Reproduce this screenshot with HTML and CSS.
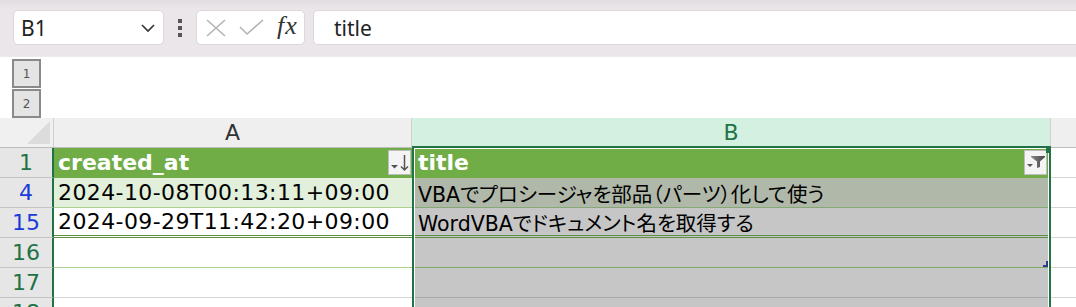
FILE: index.html
```html
<!DOCTYPE html>
<html lang="ja">
<head>
    <meta charset="UTF-8">
    <meta name="viewport" content="width=device-width, initial-scale=1.0">
    <title>Book1 - Excel</title>
    <link rel="stylesheet" href="styles.css">
</head>

<body>
    <!-- 名前ボックスと数式バー -->
    <div class="toolbar">
        <div class="name-box">
            <span>B1</span>
            <svg width="16" height="10" viewBox="0 0 16 10"><polyline points="2,2 8,8 14,2" fill="none" stroke="#333" stroke-width="1.6"/></svg>
        </div>
        <div class="more"><i></i><i></i><i></i></div>
        <div class="fx-buttons">
            <svg class="btn-cancel" width="20" height="18" viewBox="0 0 20 18"><path d="M1 1L19 17M19 1L1 17" stroke="#b4b4b4" stroke-width="1.6" fill="none"/></svg>
            <svg class="btn-enter" width="26" height="18" viewBox="0 0 26 18"><polyline points="1,8 8,15 24,1" stroke="#b4b4b4" stroke-width="1.6" fill="none"/></svg>
            <span class="fx">fx</span>
        </div>
        <div class="formula">title</div>
    </div>

    <!-- アウトラインのレベル -->
    <div class="outline">
        <div class="level">1</div>
        <div class="level">2</div>
    </div>

    <div class="sheet">
        <div class="row cols">
            <div class="corner"><div class="tri"></div></div>
            <div class="colhead">A</div>
            <div class="colhead sel">B</div>
            <div class="colhead rest"></div>
        </div>

        <div class="row r-head">
            <div class="rh">1</div>
            <div class="ca">created_at
                <span class="drop">
                    <svg width="21" height="23" viewBox="0 0 21 23"><polygon points="2,14 9,14 5.5,17.5" fill="#555"/><path d="M15.5 4V19M12 15.5L15.5 19L19 15.5" stroke="#555" stroke-width="1.5" fill="none"/></svg>
                </span>
            </div>
            <div class="cb">title
                <span class="drop">
                    <svg width="21" height="23" viewBox="0 0 21 23"><defs><linearGradient id="fun" x1="0" x2="1"><stop offset="0" stop-color="#8a8a8a"/><stop offset="1" stop-color="#444"/></linearGradient></defs><polygon points="2,13 8,13 5,16" fill="#555"/><polygon points="6,5 20,5 20,6 15,10.5 15,16 12,17 12,10.5 6,6" fill="url(#fun)"/></svg>
                </span>
            </div>
            <div class="cr"></div>
        </div>

        <div class="row r-band">
            <div class="rh blue">4</div>
            <div class="ca">2024-10-08T00:13:11+09:00</div>
            <div class="cb">VBAでプロシージャを部品（パーツ）化して使う</div>
            <div class="cr"></div>
        </div>

        <div class="row r-last">
            <div class="rh blue">15</div>
            <div class="ca">2024-09-29T11:42:20+09:00</div>
            <div class="cb">WordVBAでドキュメント名を取得する</div>
            <div class="cr"></div>
        </div>

        <div class="row r-tbl">
            <div class="rh">16</div>
            <div class="ca"></div>
            <div class="cb"><span class="resize"></span></div>
            <div class="cr"></div>
        </div>

        <div class="row r-plain">
            <div class="rh">17</div>
            <div class="ca"></div>
            <div class="cb"></div>
            <div class="cr"></div>
        </div>

        <div class="row r-plain">
            <div class="rh">18</div>
            <div class="ca"></div>
            <div class="cb"></div>
            <div class="cr"></div>
        </div>

        <!-- 列Bの選択枠 -->
        <div class="selection"></div>
        <div class="fill-handle"></div>
    </div>
</body>

</html>
```

FILE: styles.css
```css
* {
    padding: 0px;
    margin: 0px;
}

html,
body {
    height: 307px;
    overflow: hidden;
    background: #ffffff;
}

/* ツールバー */
.toolbar {
    height: 56px;
    box-sizing: border-box;
    padding: 10px 0 0 13px;
    display: flex;
    align-items: flex-start;
    background: linear-gradient(#e2dde1 0px, #ebe6ea 9px);
    font-family: "Noto Sans", sans-serif;
    font-size: 21px;
    color: #222;
}

.name-box {
    width: 151px;
    height: 35px;
    box-sizing: border-box;
    padding: 0 7px 0 7px;
    display: flex;
    align-items: center;
    justify-content: space-between;
    background: #ffffff;
    border: 1px solid #dcd7db;
    border-radius: 5px;
}

.more {
    width: 32px;
    height: 35px;
    display: flex;
    flex-direction: column;
    align-items: center;
    justify-content: center;
    gap: 3px;
}

.more i {
    width: 4px;
    height: 4px;
    background: #555;
}

.fx-buttons {
    width: 109px;
    height: 35px;
    box-sizing: border-box;
    padding: 0 6px 0 9px;
    display: flex;
    align-items: center;
    background: #ffffff;
    border: 1px solid #dcd7db;
    border-radius: 5px;
}

.btn-enter {
    margin-left: 13px;
}

.fx {
    margin-left: 12px;
    font-family: "Liberation Serif", serif;
    font-style: italic;
    font-size: 26px;
    letter-spacing: 1px;
    color: #333;
    line-height: 1;
    margin-top: -3px;
}

.formula {
    flex: 1;
    height: 35px;
    box-sizing: border-box;
    margin-left: 8px;
    padding-left: 20px;
    display: flex;
    align-items: center;
    background: #ffffff;
    border: 1px solid #dcd7db;
    border-right: none;
    border-radius: 5px 0 0 5px;
}

/* アウトライン */
.outline {
    height: 62px;
    box-sizing: border-box;
    padding: 2px 0 0 12px;
    display: flex;
    flex-direction: column;
    gap: 1px;
    border-top: 1px solid #efe8ec;
}

.level {
    width: 29px;
    height: 29px;
    box-sizing: border-box;
    border: 2px solid #8a8a8a;
    background: #e4e4e4;
    display: flex;
    align-items: center;
    justify-content: center;
    font-family: "DejaVu Sans", sans-serif;
    font-size: 12px;
    color: #555;
}

/* シート */
.sheet {
    position: relative;
    font-family: "DejaVu Sans", "Noto Sans CJK JP", sans-serif;
    font-size: 22px;
    color: #000;
}

.row {
    display: grid;
    grid-template-columns: 54px 358px 639px 1fr;
    height: 30px;
}

.row > div {
    box-sizing: border-box;
    height: 30px;
    display: flex;
    align-items: center;
    border-bottom: 1px solid #d4d4d4;
    white-space: nowrap;
    overflow: hidden;
}

.cols > div {
    background: #efefef;
    border-bottom: 1px solid #bdbdbd;
    justify-content: center;
    color: #333;
}

.corner {
    border-right: 1px solid #d0d0d0;
    justify-content: flex-end !important;
    align-items: flex-end !important;
    padding: 0 3px 3px 0;
    background: #f0f0f0 !important;
}

.corner .tri {
    width: 23px;
    height: 23px;
    background: #dcdcdc;
    clip-path: polygon(100% 0, 100% 100%, 0 100%);
}

.colhead {
    border-right: 1px solid #d0d0d0;
}

.colhead.sel {
    background: #d3f0e0 !important;
    color: #217346 !important;
    border-bottom: 2px solid #217346 !important;
}

.colhead.rest {
    border-right: none;
}

.rh {
    justify-content: center;
    background: #e6e6e6;
    border-right: 2px solid #217346;
    border-bottom-color: #c4c4c4 !important;
    color: #217346;
}

.rh.blue {
    color: #1a3ad8;
}

.ca {
    padding-left: 4px;
    letter-spacing: 0.4px;
}

.cb {
    padding-left: 6px;
    position: relative;
    font-size: 20.5px;
    font-feature-settings: "palt";
    background: #c6c6c6;
}

.cr {
    background: #ffffff;
}

/* テーブルの見出し行 */
.r-head .ca,
.r-head .cb {
    background: #70ad47;
    border-bottom-color: #70ad47;
    color: #ffffff;
    font-size: 22px;
    font-weight: bold;
    letter-spacing: 0;
    justify-content: space-between;
    padding-right: 1px;
}

.r-head .cb {
    padding-right: 4px;
}

.drop {
    width: 23px;
    height: 25px;
    box-sizing: border-box;
    display: flex;
    align-items: center;
    justify-content: center;
    background: #f4f4f4;
    border: 1px solid #bdbdbd;
}

.r-band .ca {
    background: #e2efda;
    border-bottom-color: #a9d08e;
}

.r-band .cb {
    background: #b0b8a9;
    border-bottom-color: #86a874;
}

.r-last .ca,
.r-last .cb {
    border-bottom: 3px double #5e8f45;
}

.r-tbl .ca {
    border-bottom-color: #a9d08e;
}

.r-tbl .cb {
    border-bottom-color: #7fa86a;
}

.r-plain .cb {
    border-bottom-color: #a8a8a8;
}

.resize {
    position: absolute;
    right: 3px;
    bottom: 0px;
    width: 5px;
    height: 6px;
    box-sizing: border-box;
    border-right: 2px solid #2f3d8f;
    border-bottom: 2px solid #2f3d8f;
}

.selection {
    position: absolute;
    left: 412px;
    top: 28px;
    width: 639px;
    bottom: -40px;
    box-sizing: border-box;
    border: 2px solid #217346;
    box-shadow: inset 0 0 0 1px #ffffff;
    pointer-events: none;
}

.fill-handle {
    position: absolute;
    left: 1046px;
    top: 29px;
    width: 5px;
    height: 6px;
    background: #217346;
}
```
